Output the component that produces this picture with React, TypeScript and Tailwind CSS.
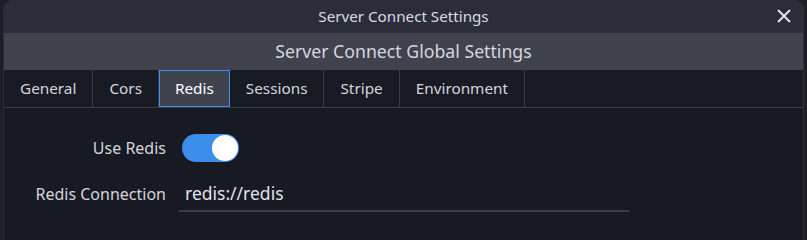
import React, { useState } from "react";

const tabs = ["General", "Cors", "Redis", "Sessions", "Stripe", "Environment"];

export default function App() {
  const [active, setActive] = useState("Redis");
  const [useRedis, setUseRedis] = useState(true);

  return (
    <div
      className="w-[807px] h-[240px] bg-[#1e1f26] pl-[3px] pr-[3px] overflow-hidden"
      style={{ fontFamily: '"Noto Sans", "Open Sans", sans-serif' }}
    >
      <div className="h-full flex flex-col rounded-t-[9px] overflow-hidden bg-[#171923] border-l border-r border-[#2a2c36]">
        {/* title bar */}
        <div className="relative h-[33px] flex items-center justify-center bg-[#2b2d3a] text-[15.2px] text-[#d9dbe0]">
          Server Connect Settings
          <svg
            className="absolute right-[12px] top-[9px]"
            width="14"
            height="14"
            viewBox="0 0 14 14"
          >
            <path d="M1 1 L13 13 M13 1 L1 13" stroke="#e4e5ea" strokeWidth="2" />
          </svg>
        </div>

        {/* header */}
        <div className="h-[37px] flex items-center justify-center bg-[#40424e] text-[17.7px] text-[#d4d6dd]">
          Server Connect Global Settings
        </div>

        {/* tabs */}
        <div className="h-[38px] flex bg-[#181a24] border-b border-[#3a3c47]">
          {tabs.map((t) => (
            <div
              key={t}
              onClick={() => setActive(t)}
              className={
                t === active
                  ? "h-full flex items-center px-[15px] bg-[#40424e] border border-[#3f8ff0] text-[15.3px] text-white"
                  : "h-full flex items-center px-[16px] border-r border-[#3a3c47] text-[15.3px] text-[#d4d6dc]"
              }
            >
              {t}
            </div>
          ))}
        </div>

        {/* content */}
        <div className="flex flex-col pt-[26px] gap-[14px]">
          <div className="flex items-center">
            <div className="w-[162px] text-right text-[16px] text-[#d4d6dc]">Use Redis</div>
            <button
              onClick={() => setUseRedis(!useRedis)}
              className={
                useRedis
                  ? "ml-[16px] w-[57px] h-[28px] rounded-full bg-[#3b8eea] flex items-center justify-end pr-[1px]"
                  : "ml-[16px] w-[57px] h-[28px] rounded-full bg-[#40424e] flex items-center justify-start pl-[1px]"
              }
            >
              <span className="w-[26px] h-[26px] rounded-full bg-white block" />
            </button>
          </div>
          <div className="flex items-center">
            <div className="w-[162px] text-right text-[16px] text-[#d4d6dc]">Redis Connection</div>
            <div className="ml-[13px] w-[450px] h-[36px] flex items-center pl-[6px] border-b-2 border-[#3a3c47] text-[17.5px] text-[#e2e3e8]">
              redis://redis
            </div>
          </div>
        </div>
      </div>
    </div>
  );
}
